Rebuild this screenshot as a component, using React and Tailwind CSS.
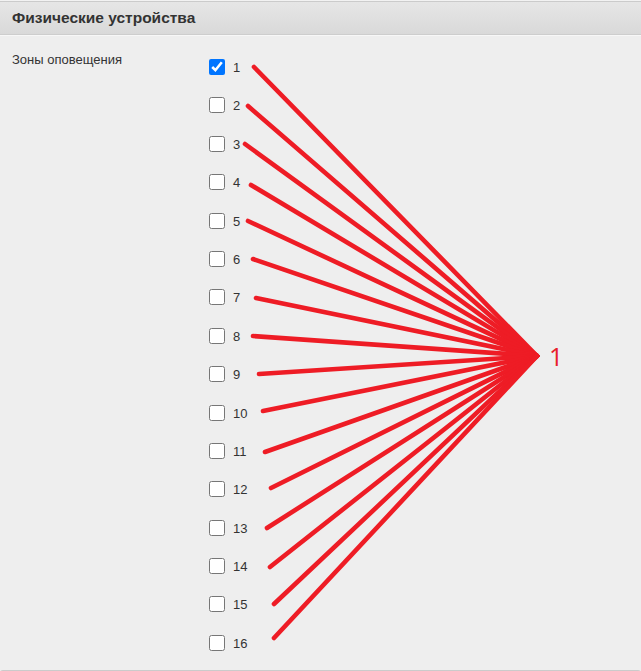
import React from "react";

const starts = [
  [254, 67], [248, 106], [245, 144], [251, 185], [248, 221], [253, 259],
  [256, 298], [253, 336], [259, 374], [263, 411], [265, 452], [271, 488],
  [267, 528], [270, 567], [274, 604], [274, 638],
];

export default function App() {
  const nums = Array.from({ length: 16 }, (_, i) => i + 1);
  return (
    <div className="relative w-[641px] h-[671px] bg-[#efefef] overflow-hidden" style={{ fontFamily: '"Liberation Sans", Arial, sans-serif' }}>
      <div className="h-px bg-[#f2f2f2]" />
      <div className="flex flex-col h-[670px] border-t border-b border-[#cbcbcb] rounded-b-[3px]">
        <div className="h-[33px] flex items-center px-3 bg-gradient-to-b from-[#e6e6e6] to-[#d9d9d9] border-b border-[#cdcdcd]">
          <span className="text-[15.5px] font-bold text-[#333333]">Физические устройства</span>
        </div>
        <div className="h-px bg-[#f7f7f7]" />
        <div className="flex-1 bg-[#eeeeee] flex pl-3 pt-[16px]">
          <div className="w-[197px] text-[13px] text-[#333333] leading-[16px]">Зоны оповещения</div>
          <div className="flex flex-col">
            {nums.map((n) => (
              <label key={n} className="h-[38.4px] flex items-start gap-[8px] text-[13px] text-[#333333]">
                <input type="checkbox" defaultChecked={n === 1} className="w-4 h-4 m-0 mt-[7px]" />
                <span className="mt-[7px] leading-[18px]">{n}</span>
              </label>
            ))}
          </div>
        </div>
      </div>
      <svg className="absolute inset-0 pointer-events-none" width="641" height="671">
        {starts.map(([x, y], i) => (
          <line key={i} x1={x} y1={y} x2={537} y2={356} stroke="#ee1c25" strokeWidth="4.6" strokeLinecap="round" />
        ))}
      </svg>
      <div className="absolute left-[549px] top-[341px] text-[25px] leading-[30px] text-[#e8202a]" style={{ fontFamily: '"Open Sans", sans-serif' }}>1</div>
    </div>
  );
}
